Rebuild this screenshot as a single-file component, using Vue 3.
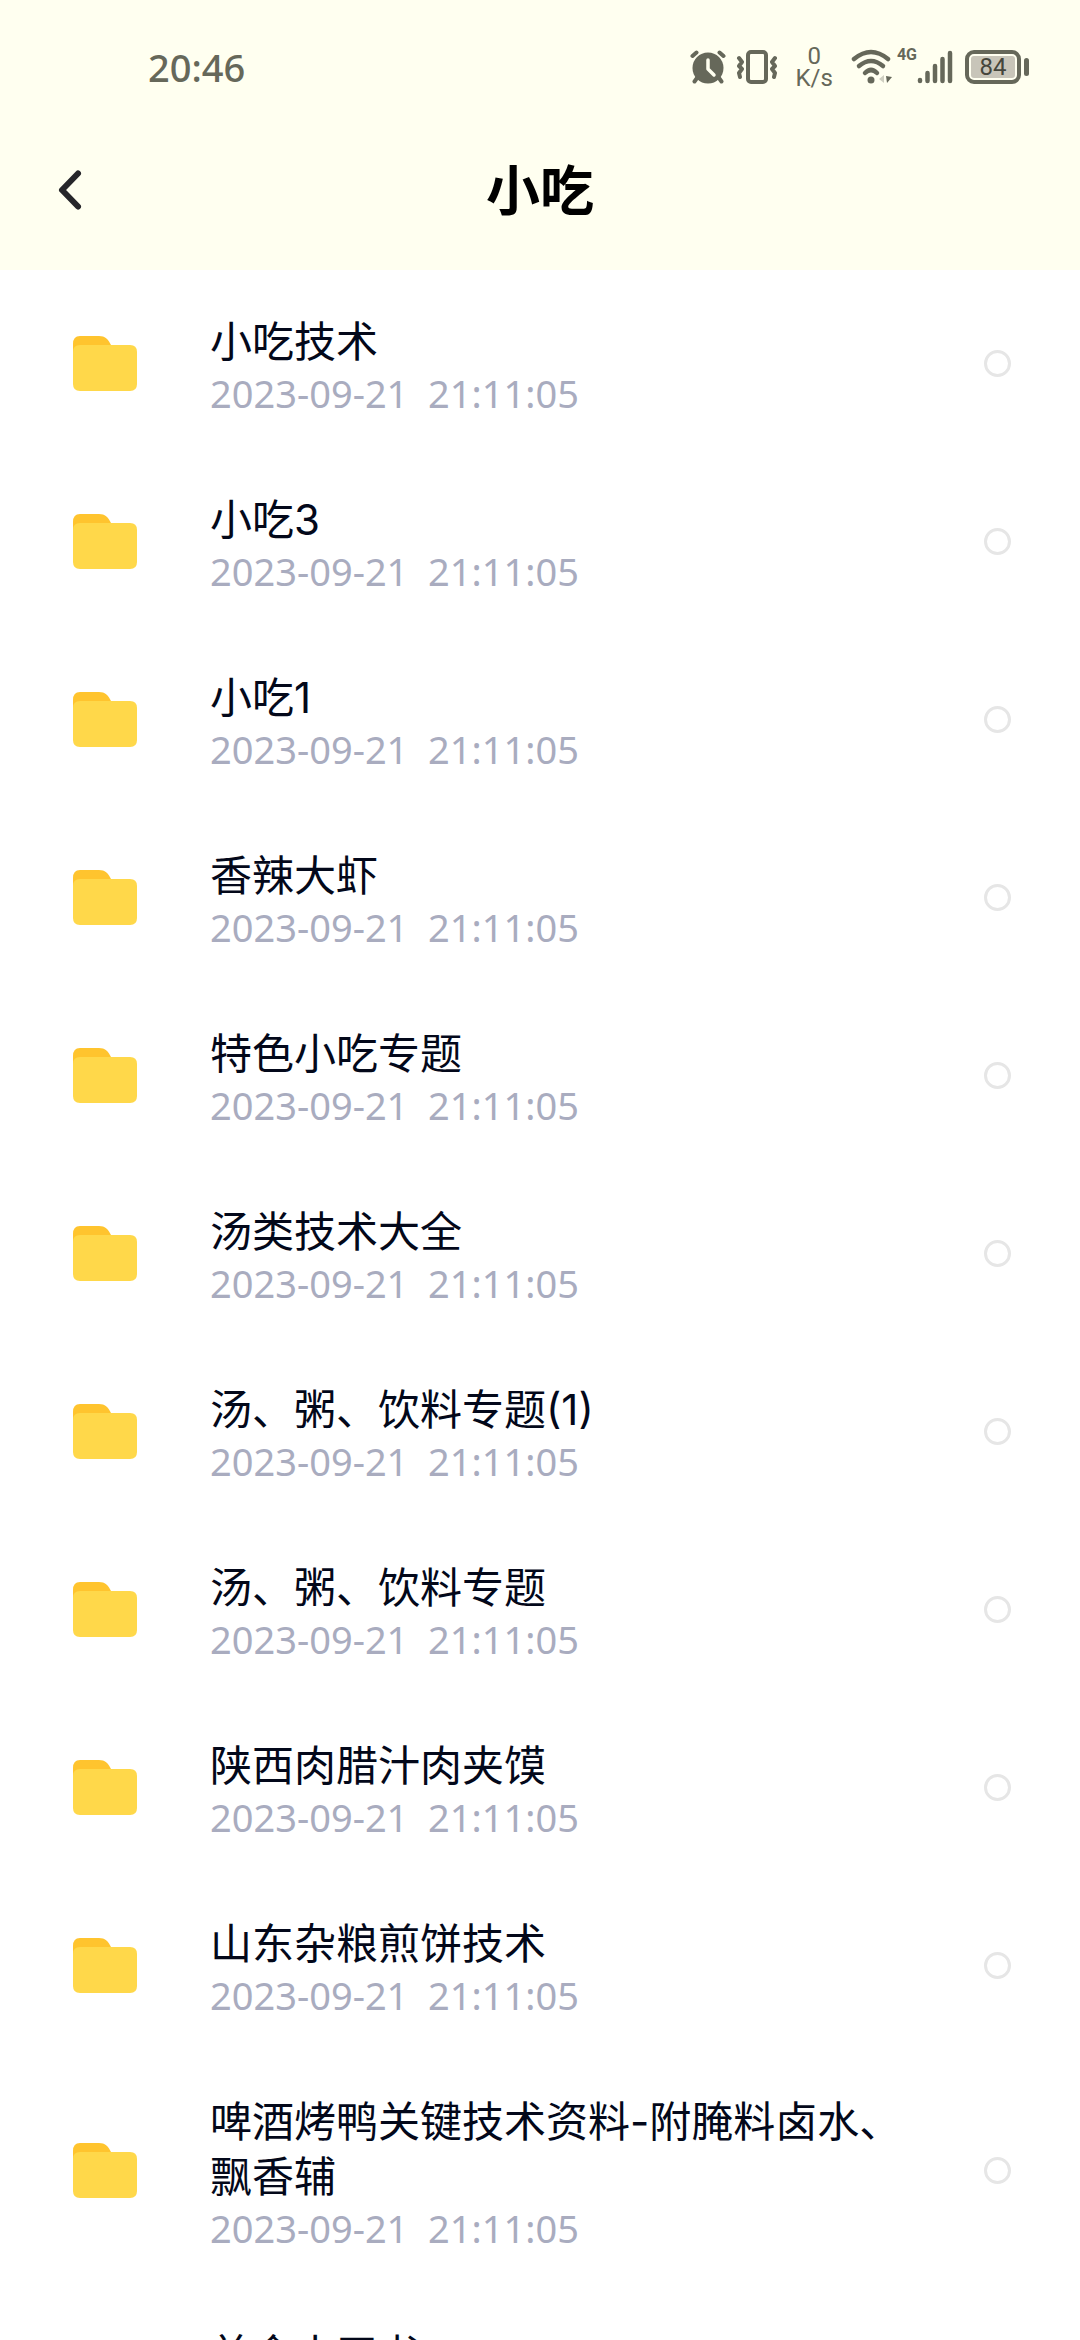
<script setup>
import { ref } from 'vue'

const names = [
  '小吃技术',
  '小吃3',
  '小吃1',
  '香辣大虾',
  '特色小吃专题',
  '汤类技术大全',
  '汤、粥、饮料专题(1)',
  '汤、粥、饮料专题',
  '陕西肉腊汁肉夹馍',
  '山东杂粮煎饼技术',
  '啤酒烤鸭关键技术资料-附腌料卤水、飘香辅',
  '美食小天书',
]
const folders = ref(names.map((name, i) => ({
  id: `folder-${i}`,
  name,
  time: '2023-09-21  21:11:05',
  checked: false,
})))
</script>

<template>
  <div class="screen">
    <header class="top">
      <div class="status">
        <time class="clock">20:46</time>
        <div class="indicators">
          <svg class="alarm" width="36" height="34" viewBox="0 0 36 34" aria-hidden="true">
            <circle cx="18" cy="18" r="15.5" fill="#66685a" />
            <path d="M2.500 6 6.500 2.500M33.500 6 29.500 2.500M7 28 4.500 31.500M29 28 31.500 31.500" stroke="#66685a" stroke-width="4" stroke-linecap="round" />
            <path d="M18 10v9l6 6" fill="none" stroke="#fffff0" stroke-width="3.5" stroke-linecap="round" stroke-linejoin="round" />
          </svg>
          <svg class="vibrate" width="42" height="34" viewBox="0 0 42 34" aria-hidden="true">
            <g fill="none" stroke="#66685a" stroke-linecap="round" stroke-linejoin="round">
              <rect x="12" y="2" width="18" height="30" rx="3" stroke-width="4" />
              <path d="M3 8l3 4-3 4 3 3-3 4 1 4M39 8l-3 4 3 4-3 3 3 4-1 4" stroke-width="4" />
            </g>
          </svg>
          <div class="speed"><span>0</span><span>K/s</span></div>
          <svg class="wifi" width="42" height="36" viewBox="0 0 42 36" aria-hidden="true">
            <g fill="none" stroke="#66685a" stroke-width="4.5" stroke-linecap="round">
              <path d="M3 10Q20 -4 37 10" />
              <path d="M8 17Q20 7 32 17" />
              <path d="M14 24Q20 18 26 24" />
            </g>
            <circle cx="20" cy="31" r="3.5" fill="#66685a" />
            <path d="M33 26v8l-5-4z" fill="#cfcfc1" />
            <path d="M35 27l6 1-5 6z" fill="#66685a" />
          </svg>
          <span class="network">4G</span>
          <svg class="signal" width="36" height="34" viewBox="0 0 36 34" aria-hidden="true">
            <path d="M3 30v1M10.500 23v8M18 16v15M25.500 9v22M33 3v28" stroke="#66685a" stroke-width="4.5" stroke-linecap="round" />
          </svg>
          <div class="battery"><span class="level">84</span></div>
        </div>
      </div>
      <div class="bar">
        <button class="back" type="button" aria-label="返回">
          <svg width="30" height="42" viewBox="0 0 30 42" aria-hidden="true">
            <path d="M22 4.500 6 21 22 37.500" fill="none" stroke="#26262a" stroke-width="6" stroke-linecap="round" stroke-linejoin="round" />
          </svg>
        </button>
        <h1>小吃</h1>
      </div>
    </header>
    <ul class="list">
      <li v-for="f in folders" :key="f.id">
        <label class="row" :for="f.id">
          <svg class="folder" width="64" height="55" viewBox="0 0 64 55" aria-hidden="true">
            <path d="M0 8Q0 0 7 0h19c6 0 9 3 12 9v10H0z" fill="#ffc42e" />
            <path d="M0 16Q0 9 7 9h50q7 0 7 7v32q0 7-7 7H7q-7 0-7-7z" fill="#ffd84a" />
          </svg>
          <span class="text">
            <span class="name">{{ f.name }}</span>
            <time class="time">{{ f.time }}</time>
          </span>
          <input :id="f.id" v-model="f.checked" class="pick" type="checkbox">
        </label>
      </li>
    </ul>
  </div>
</template>

<style>
body {
  margin: 0;
  background: #fff;
}
</style>

<style scoped>
.screen {
  display: flex;
  flex-direction: column;
  height: 100vh;
  background: #fff;
  font-family: "Noto Sans", "Noto Sans CJK SC", sans-serif;
}
.top {
  flex: none;
  background: #fffff0;
}
.status {
  display: flex;
  justify-content: space-between;
  align-items: center;
  height: 134px;
  padding: 0 59px 0 148px;
  color: #66685a;
}
.clock {
  font-size: 38px;
  font-weight: 500;
  line-height: 48px;
}
.indicators {
  display: flex;
  align-items: center;
}
.vibrate {
  margin-left: 10px;
}
.speed {
  display: flex;
  flex-direction: column;
  align-items: center;
  margin: 0 18px;
  font-family: Roboto, sans-serif;
  font-size: 24px;
  line-height: 22px;
}
.network {
  align-self: flex-start;
  margin-left: 4px;
  font-family: Roboto, sans-serif;
  font-size: 16px;
  font-weight: 700;
  line-height: 20px;
}
.battery {
  display: flex;
  position: relative;
  box-sizing: border-box;
  width: 56px;
  height: 34px;
  margin-left: 12px;
  padding: 2px;
  border: 4px solid #66685a;
  border-radius: 9px;
}
.battery::after {
  content: "";
  position: absolute;
  top: 4px;
  right: -12px;
  width: 5px;
  height: 18px;
  border-radius: 3px;
  background: #66685a;
}
.level {
  width: 44px;
  background: #c8c5b9;
  border-radius: 3px;
  color: #45463c;
  font-family: Roboto, sans-serif;
  font-size: 24px;
  line-height: 22px;
  text-align: center;
}
.bar {
  display: grid;
  grid-template-columns: 1fr auto 1fr;
  align-items: center;
  box-sizing: border-box;
  height: 136px;
  padding: 0 56px 24px;
}
.back {
  display: flex;
  justify-self: start;
  padding: 0;
  border: 0;
  background: none;
}
h1 {
  grid-column: 2;
  margin: 0;
  font-size: 54px;
  font-weight: 700;
  line-height: 64px;
}
.list {
  flex: 1;
  min-height: 0;
  margin: 0;
  padding: 4px 0 0;
  overflow-y: auto;
  scrollbar-width: none;
  list-style: none;
}
.row {
  display: flex;
  align-items: center;
  padding: 34px 69px 34px 73px;
}
.folder {
  flex: none;
}
.text {
  display: flex;
  flex: 1;
  flex-direction: column;
  min-width: 0;
  margin: 0 80px 0 73px;
  padding-top: 6px;
}
.name {
  color: #03081a;
  font-family: Inter, "Noto Sans CJK SC", sans-serif;
  font-size: 42px;
  line-height: 55px;
}
.time {
  color: #a9acbf;
  font-size: 38px;
  line-height: 49px;
  white-space: pre;
}
.pick {
  flex: none;
  appearance: none;
  box-sizing: border-box;
  width: 27px;
  height: 27px;
  margin: 0;
  border: 3px solid #e6e6e6;
  border-radius: 50%;
}
.pick:checked {
  border-color: #ffc42e;
  background: #ffd84a;
}
</style>
